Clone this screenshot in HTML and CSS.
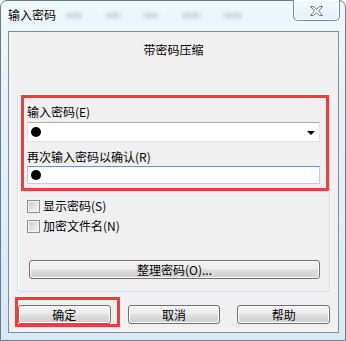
FILE: index.html
```html
<!DOCTYPE html>
<html>
<head>
<meta charset="utf-8">
<link rel="stylesheet" href="styles.css">
</head>
<body>
<div class="screen">
  <div class="window">
    <div class="titlebar">
      <div class="title">输入密码</div>
      <div class="blurs">
        <span class="blob b1"></span><span class="blob b2"></span><span class="blob b3"></span><span class="blob b4"></span><span class="blob b5"></span>
      </div>
      <div class="close">
        <svg width="13" height="10" viewBox="0 0 13 10">
          <path d="M0.5 0.5 H3.5 L6.5 3.2 L9.5 0.5 H12.5 L8.5 5 L12.5 9.5 H9.5 L6.5 6.8 L3.5 9.5 H0.5 L4.5 5 Z" fill="#fff" stroke="#6a727c" stroke-width="1"/>
        </svg>
      </div>
    </div>
    <div class="client">
      <div class="header">带密码压缩</div>
      <div class="panel">
        <div class="label">输入密码(E)</div>
        <div class="combo">
          <span class="dot"></span>
          <span class="arrow"></span>
        </div>
        <div class="label label2">再次输入密码以确认(R)</div>
        <div class="field"><span class="dot"></span></div>
        <div class="check first"><span class="box"></span><span>显示密码(S)</span></div>
        <div class="check"><span class="box"></span><span>加密文件名(N)</span></div>
        <div class="btn wide">整理密码(O)...</div>
      </div>
      <div class="actions">
        <div class="btn">确定</div>
        <div class="btn">取消</div>
        <div class="btn">帮助</div>
      </div>
    </div>
  </div>
  <div class="mark mark-fields"></div>
  <div class="mark mark-ok"></div>
</div>
</body>
</html>
```

FILE: styles.css
```css
html, body {
  margin: 0;
  padding: 0;
  background: #ffffff;
}
body {
  font-family: "Noto Sans CJK SC", "Noto Sans", sans-serif;
  font-size: 12px;
  color: #000;
}
.screen {
  position: relative;
  width: 346px;
  height: 341px;
  overflow: hidden;
}
.window {
  box-sizing: border-box;
  width: 346px;
  height: 341px;
  border: 1px solid #6b7a88;
  border-radius: 7px 7px 0 0;
  background: linear-gradient(to bottom, #eef7fc 0%, #e2f0f9 40%, #d8e9f5 100%);
  padding: 0 6px 7px 7px;
  display: flex;
  flex-direction: column;
}
.titlebar {
  height: 30px;
  display: flex;
  align-items: flex-start;
  flex-shrink: 0;
}
.title {
  padding-top: 6px;
  line-height: 16px;
  font-size: 12px;
  text-shadow: 0 0 4px #fff, 0 0 6px #fff;
  white-space: nowrap;
}
.blurs {
  flex: 1;
  display: flex;
  gap: 24px;
  padding: 12px 0 0 10px;
}
.blob {
  display: block;
  height: 5px;
  background: #a9b1b8;
  filter: blur(2px);
  opacity: 0.5;
}
.b1 { width: 16px; }
.b2 { width: 14px; }
.b3 { width: 14px; }
.b4 { width: 18px; }
.b5 { width: 18px; }
.close {
  box-sizing: border-box;
  width: 47px;
  height: 21px;
  margin: -1px -1px 0 0;
  border: 1px solid #7d8a99;
  border-top: none;
  border-radius: 0 0 5px 5px;
  background: linear-gradient(to bottom, #f6fafd, #e6f0f8);
  box-shadow: inset 0 0 0 1px rgba(255,255,255,0.8);
  display: flex;
  align-items: center;
  justify-content: center;
  padding-top: 1px;
}
.client {
  flex: 1;
  border: 1px solid #838d97;
  background: #f0f0f0;
  display: flex;
  flex-direction: column;
  padding: 0 8px;
}
.header {
  height: 63px;
  box-sizing: border-box;
  padding-top: 10px;
  line-height: 16px;
  text-align: center;
  flex-shrink: 0;
}
.panel {
  box-sizing: border-box;
  height: 197px;
  border: 1px solid #d5dfe5;
  border-radius: 3px;
  box-shadow: inset 1px 1px 0 #fff;
  padding: 8px 9px 0 9px;
  display: flex;
  flex-direction: column;
  flex-shrink: 0;
}
.label {
  line-height: 16px;
  height: 16px;
  white-space: nowrap;
}
.label2 {
  margin-top: 7px;
}
.combo {
  box-sizing: border-box;
  margin-top: 2px;
  height: 20px;
  background: #fff;
  border: 1px solid #e2e3ea;
  border-top-color: #abadb3;
  display: flex;
  align-items: center;
  justify-content: space-between;
  padding: 0 4px 0 3px;
}
.field {
  box-sizing: border-box;
  margin-top: 1px;
  height: 18px;
  background: #fff;
  border: 1px solid #b5cfe7;
  border-top-color: #5d9ad2;
  display: flex;
  align-items: center;
  padding-left: 3px;
}
.dot {
  display: block;
  width: 10px;
  height: 10px;
  border-radius: 50%;
  background: #000;
}
.arrow {
  display: block;
  width: 0;
  height: 0;
  border-left: 4px solid transparent;
  border-right: 4px solid transparent;
  border-top: 4px solid #000;
  margin-top: 1px;
}
.check {
  display: flex;
  align-items: center;
  gap: 3px;
  height: 16px;
  line-height: 16px;
  margin-top: 4px;
}
.check.first {
  margin-top: 14px;
}
.box {
  box-sizing: border-box;
  width: 13px;
  height: 13px;
  border: 1px solid #8e8f8f;
  background: linear-gradient(135deg, #cbcbcb 0%, #e6e6e6 60%, #f6f6f6 100%);
  box-shadow: inset 0 0 0 1px #f4f4f4;
  flex-shrink: 0;
}
.btn {
  box-sizing: border-box;
  height: 19px;
  border: 1px solid #707070;
  border-radius: 3px;
  background: linear-gradient(to bottom, #f3f3f3 0%, #ebebeb 48%, #dddddd 52%, #cfcfcf 100%);
  box-shadow: inset 0 0 0 1px #fbfbfb;
  display: flex;
  align-items: center;
  justify-content: center;
  line-height: 16px;
  white-space: nowrap;
}
.btn.wide {
  margin: 26px 0 0 2px;
}
.actions {
  display: flex;
  gap: 17px;
  margin-top: 13px;
  padding-left: 1px;
}
.actions .btn {
  width: 93px;
}
.mark {
  position: absolute;
  box-sizing: border-box;
  border: 3px solid #f53b3b;
}
.mark-fields {
  left: 21px;
  top: 95px;
  width: 308px;
  height: 96px;
}
.mark-ok {
  left: 15px;
  top: 297px;
  width: 105px;
  height: 30px;
}
```
